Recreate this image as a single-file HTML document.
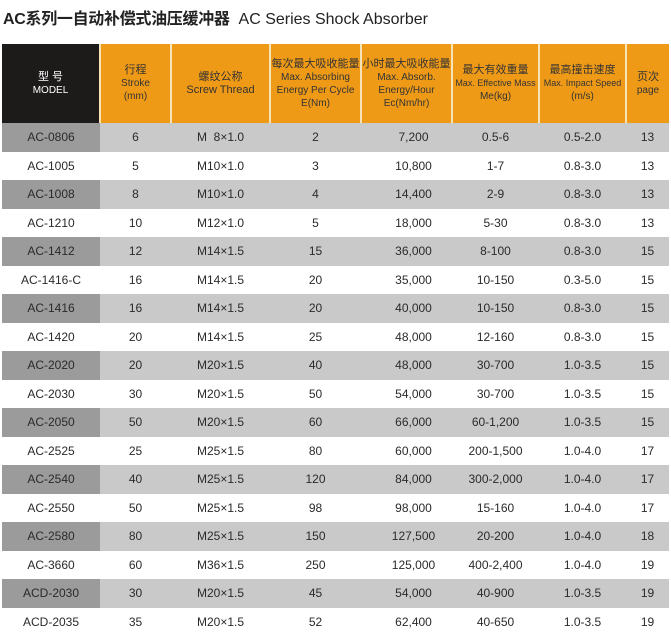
<!DOCTYPE html>
<html><head><meta charset="utf-8"><style>
body{margin:0;width:671px;height:638px;background:#fff;font-family:"Liberation Sans","Noto Sans CJK SC",sans-serif;overflow:hidden;position:relative}
.title{position:absolute;left:3px;top:5px;font-size:16px;color:#222;white-space:nowrap}
.title b{font-weight:bold;letter-spacing:-0.3px}
table{position:absolute;left:2px;top:44px;border-collapse:collapse;table-layout:fixed;width:667px}
td,th{padding:0;text-align:center;font-size:12px;color:#2a2a2a}
th{height:79px;background:#ef9a17;color:#333;font-weight:normal;font-size:10px;line-height:13px;border-left:2px solid #f6e3b8}
th.m{background:#1d1a1a;color:#fff;border-left:none}
th .c{font-size:11px}
tr.r td{height:28.5px}
tr.g td{background:#c9c9c9}
tr.g td.m{background:#9b9b9b}
td.e{padding-left:14px}
</style></head><body>
<div class="title"><b>AC系列一自动补偿式油压缓冲器</b>&nbsp; AC Series Shock Absorber</div>
<table>
<colgroup><col style="width:98px"><col style="width:71px"><col style="width:99px"><col style="width:91px"><col style="width:91px"><col style="width:87px"><col style="width:87px"><col style="width:43px"></colgroup>
<tr><th class="m"><span class="c">型 号</span><br>MODEL</th><th><span class="c">行程</span><br>Stroke<br>(mm)</th><th><span class="c">螺纹公称</span><br><span style="font-size:11px">Screw Thread</span></th><th><span class="c">每次最大吸收能量</span><br>Max. Absorbing<br>Energy Per Cycle<br>E(Nm)</th><th><span class="c">小时最大吸收能量</span><br>Max. Absorb.<br>Energy/Hour<br>Ec(Nm/hr)</th><th><span class="c">最大有效重量</span><br><span style="font-size:9px">Max. Effective Mass</span><br>Me(kg)</th><th><span class="c">最高撞击速度</span><br><span style="font-size:9px">Max. Impact Speed</span><br>(m/s)</th><th><span class="c">页次</span><br>page</th></tr>
<tr class="r g"><td class="m">AC-0806</td><td>6</td><td>M&nbsp;&nbsp;8×1.0</td><td>2</td><td class="e">7,200</td><td>0.5-6</td><td>0.5-2.0</td><td>13</td></tr>
<tr class="r"><td class="m">AC-1005</td><td>5</td><td>M10×1.0</td><td>3</td><td class="e">10,800</td><td>1-7</td><td>0.8-3.0</td><td>13</td></tr>
<tr class="r g"><td class="m">AC-1008</td><td>8</td><td>M10×1.0</td><td>4</td><td class="e">14,400</td><td>2-9</td><td>0.8-3.0</td><td>13</td></tr>
<tr class="r"><td class="m">AC-1210</td><td>10</td><td>M12×1.0</td><td>5</td><td class="e">18,000</td><td>5-30</td><td>0.8-3.0</td><td>13</td></tr>
<tr class="r g"><td class="m">AC-1412</td><td>12</td><td>M14×1.5</td><td>15</td><td class="e">36,000</td><td>8-100</td><td>0.8-3.0</td><td>15</td></tr>
<tr class="r"><td class="m">AC-1416-C</td><td>16</td><td>M14×1.5</td><td>20</td><td class="e">35,000</td><td>10-150</td><td>0.3-5.0</td><td>15</td></tr>
<tr class="r g"><td class="m">AC-1416</td><td>16</td><td>M14×1.5</td><td>20</td><td class="e">40,000</td><td>10-150</td><td>0.8-3.0</td><td>15</td></tr>
<tr class="r"><td class="m">AC-1420</td><td>20</td><td>M14×1.5</td><td>25</td><td class="e">48,000</td><td>12-160</td><td>0.8-3.0</td><td>15</td></tr>
<tr class="r g"><td class="m">AC-2020</td><td>20</td><td>M20×1.5</td><td>40</td><td class="e">48,000</td><td>30-700</td><td>1.0-3.5</td><td>15</td></tr>
<tr class="r"><td class="m">AC-2030</td><td>30</td><td>M20×1.5</td><td>50</td><td class="e">54,000</td><td>30-700</td><td>1.0-3.5</td><td>15</td></tr>
<tr class="r g"><td class="m">AC-2050</td><td>50</td><td>M20×1.5</td><td>60</td><td class="e">66,000</td><td>60-1,200</td><td>1.0-3.5</td><td>15</td></tr>
<tr class="r"><td class="m">AC-2525</td><td>25</td><td>M25×1.5</td><td>80</td><td class="e">60,000</td><td>200-1,500</td><td>1.0-4.0</td><td>17</td></tr>
<tr class="r g"><td class="m">AC-2540</td><td>40</td><td>M25×1.5</td><td>120</td><td class="e">84,000</td><td>300-2,000</td><td>1.0-4.0</td><td>17</td></tr>
<tr class="r"><td class="m">AC-2550</td><td>50</td><td>M25×1.5</td><td>98</td><td class="e">98,000</td><td>15-160</td><td>1.0-4.0</td><td>17</td></tr>
<tr class="r g"><td class="m">AC-2580</td><td>80</td><td>M25×1.5</td><td>150</td><td class="e">127,500</td><td>20-200</td><td>1.0-4.0</td><td>18</td></tr>
<tr class="r"><td class="m">AC-3660</td><td>60</td><td>M36×1.5</td><td>250</td><td class="e">125,000</td><td>400-2,400</td><td>1.0-4.0</td><td>19</td></tr>
<tr class="r g"><td class="m">ACD-2030</td><td>30</td><td>M20×1.5</td><td>45</td><td class="e">54,000</td><td>40-900</td><td>1.0-3.5</td><td>19</td></tr>
<tr class="r"><td class="m">ACD-2035</td><td>35</td><td>M20×1.5</td><td>52</td><td class="e">62,400</td><td>40-650</td><td>1.0-3.5</td><td>19</td></tr>
</table>
</body></html>
